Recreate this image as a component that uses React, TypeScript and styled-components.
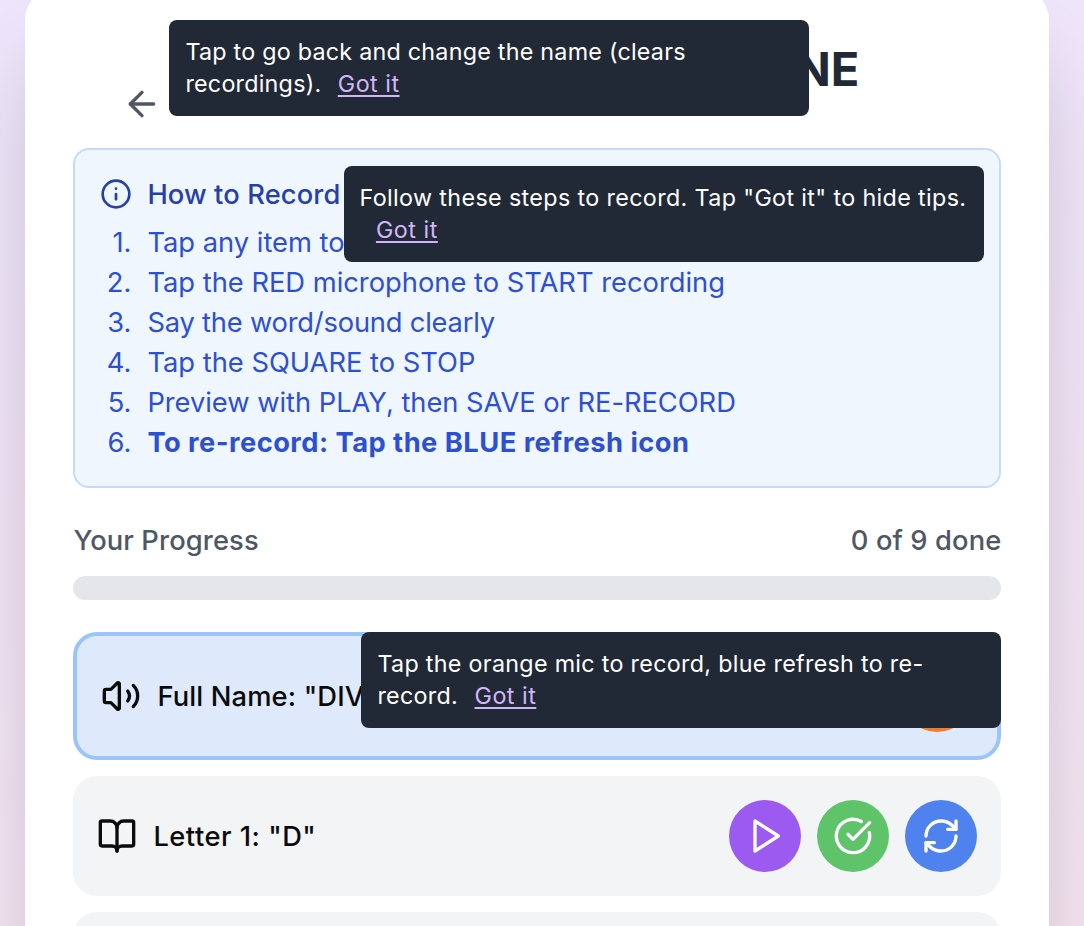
import React from "react";
import styled, { createGlobalStyle } from "styled-components";
import { ArrowLeft, BookOpen, CircleCheckBig, Info, Mic, RefreshCw, Volume2 } from "lucide-react";

const GlobalStyle = createGlobalStyle`
  * { box-sizing: border-box; }
  html, body { margin: 0; padding: 0; }
  body {
    height: 926px;
    overflow: hidden;
    font-family: Inter, "Liberation Sans", sans-serif;
    -webkit-font-smoothing: antialiased;
  }
`;

const Page = styled.div`
  height: 926px;
  overflow: hidden;
  padding: 0 34.6px 0 25.4px;
  background: linear-gradient(173deg, #efe6fd 0, #f2e5f8 450px, #f6e6f3 1050px);
`;

const Card = styled.main`
  width: 1024px;
  height: 2200px;
  margin-top: -12px;
  padding: 48px;
  border-radius: 32px;
  background: #fff;
  box-shadow: 0 50px 100px -24px rgba(0, 0, 0, 0.25);
`;

const Header = styled.header`
  position: relative;
  display: flex;
  align-items: flex-start;
  height: 112.4px;
`;

const BackButton = styled.button`
  display: flex;
  margin-top: 32px;
  padding: 16px 16px 16px 49px;
  border: 0;
  background: none;
  color: #4f5764;
`;

const Title = styled.h1`
  flex: 1;
  margin: 0;
  padding: 1px 142px 0 0;
  text-align: right;
  font-size: 47px;
  line-height: 64px;
  font-weight: 700;
  color: #222936;
  white-space: nowrap;
`;

const Tip = styled.div<{ $left: number; $top: number; $tracking: number }>`
  position: absolute;
  z-index: 2;
  left: ${(p) => p.$left}px;
  top: ${(p) => p.$top}px;
  width: 640px;
  padding: 16px;
  border-radius: 8px;
  background: #222936;
  color: #fff;
  font-size: 23.3px;
  font-weight: 400;
  line-height: 32px;
  letter-spacing: ${(p) => p.$tracking}px;
`;

const TipLink = styled.button`
  margin: 0 0 0 16.4px;
  padding: 0;
  border: 0;
  background: none;
  color: #d2b5f9;
  font: inherit;
  letter-spacing: 0.5px;
  text-decoration: underline;
  text-decoration-thickness: 2px;
  text-underline-offset: 3px;
`;

const InfoBox = styled.section`
  position: relative;
  padding: 24px;
  border: 2px solid #c4dbfb;
  border-radius: 16px;
  background: #f0f6fe;
`;

const InfoHeading = styled.h2`
  display: flex;
  align-items: center;
  gap: 15.4px;
  height: 40px;
  margin: 0 0 8.6px;
  padding-left: 0.6px;
  font-size: 27.3px;
  line-height: 40px;
  font-weight: 500;
  letter-spacing: 0.12px;
  color: #2740a8;

  span {
    padding-top: 1px;
  }
`;

const Steps = styled.ol`
  margin: 0 0 -0.6px;
  padding: 0;
  list-style: none;
  counter-reset: step;
  font-size: 27.3px;
  line-height: 40px;
  color: #2d50d2;
`;

const Step = styled.li<{ $tracking?: number }>`
  display: flex;
  counter-increment: step;
  letter-spacing: ${(p) => p.$tracking ?? 0}px;

  &::before {
    content: counter(step) ".";
    width: 32px;
    margin-right: 16px;
    text-align: right;
    letter-spacing: 0;
  }
`;

const Strong = styled.strong`
  font-weight: 700;
  letter-spacing: 0.47px;
`;

const ProgressLabels = styled.div`
  display: flex;
  justify-content: space-between;
  margin: 32.6px 0 15.4px;
  font-size: 27.3px;
  line-height: 40px;
  font-weight: 500;
  letter-spacing: 0.12px;
  color: #4f5764;
`;

const Track = styled.div`
  height: 24px;
  border-radius: 12px;
  background: #e5e6ea;
`;

const Rows = styled.div`
  display: flex;
  flex-direction: column;
  gap: 16px;
  margin-top: 32px;
`;

const RowBox = styled.div<{ $active?: boolean }>`
  position: relative;
  display: flex;
  align-items: center;
  justify-content: space-between;
  min-height: 120px;
  padding: 24px;
  border-radius: 24px;
  border: ${(p) => (p.$active ? "4px solid #9bc4fa" : "0")};
  background: ${(p) => (p.$active ? "#dee9fc" : "#f3f4f6")};
`;

const Label = styled.div<{ $tracking: number }>`
  display: flex;
  align-items: center;
  gap: 16px;
  height: 40px;
  font-size: 27.3px;
  line-height: 40px;
  font-weight: 500;
  letter-spacing: ${(p) => p.$tracking}px;
  color: #0b0b0b;

  span {
    padding-top: 1px;
  }
`;

const Actions = styled.div`
  display: flex;
  gap: 16px;
`;

const RoundButton = styled.button<{ $color: string }>`
  display: flex;
  align-items: center;
  justify-content: center;
  width: 72px;
  height: 72px;
  padding: 0;
  border: 0;
  border-radius: 50%;
  background: ${(p) => p.$color};
  color: #fff;
`;

const PlayIcon = () => (
  <svg width="40" height="40" viewBox="0 0 24 24" fill="none" stroke="currentColor" strokeWidth="2" strokeLinecap="round" strokeLinejoin="round">
    <polygon points="6 3 20 12 6 21 6 3" />
  </svg>
);

function RecordedRow({ label }: { label: string }) {
  return (
    <RowBox>
      <Label $tracking={0.5}>
        <BookOpen size={40} />
        <span>{label}</span>
      </Label>
      <Actions>
        <RoundButton $color="#9d5af0" aria-label="Play"><PlayIcon /></RoundButton>
        <RoundButton $color="#5fc36a" aria-label="Saved"><CircleCheckBig size={40} /></RoundButton>
        <RoundButton $color="#4f82ee" aria-label="Re-record"><RefreshCw size={40} /></RoundButton>
      </Actions>
    </RowBox>
  );
}

export default function App() {
  return (
    <>
      <GlobalStyle />
      <Page>
        <Card>
          <Header>
            <BackButton aria-label="Back"><ArrowLeft size={40} /></BackButton>
            <Title>DIVINE</Title>
            <Tip $left={96} $top={-16} $tracking={0.24}>
              Tap to go back and change the name (clears recordings).<TipLink>Got it</TipLink>
            </Tip>
          </Header>
          <InfoBox>
            <InfoHeading>
              <Info size={32} />
              <span>How to Record</span>
            </InfoHeading>
            <Steps>
              <Step>Tap any item to</Step>
              <Step>Tap the RED microphone to START recording</Step>
              <Step $tracking={-0.2}>Say the word/sound clearly</Step>
              <Step>Tap the SQUARE to STOP</Step>
              <Step $tracking={-0.03}>Preview with PLAY, then SAVE or RE-RECORD</Step>
              <Step><Strong>To re-record: Tap the BLUE refresh icon</Strong></Step>
            </Steps>
            <Tip $left={268.2} $top={15.6} $tracking={0.36}>
              Follow these steps to record. Tap "Got it" to hide tips.<TipLink>Got it</TipLink>
            </Tip>
          </InfoBox>
          <ProgressLabels>
            <span>Your Progress</span>
            <span>0 of 9 done</span>
          </ProgressLabels>
          <Track />
          <Rows>
            <RowBox $active>
              <Label $tracking={0.15}>
                <Volume2 size={40} />
                <span>Full Name: "DIVINE"</span>
              </Label>
              <Actions>
                <RoundButton $color="#ed7d31" aria-label="Record"><Mic size={40} /></RoundButton>
              </Actions>
              <Tip $left={284} $top={-4} $tracking={0.3}>
                Tap the orange mic to record, blue refresh to re-record.<TipLink>Got it</TipLink>
              </Tip>
            </RowBox>
            <RecordedRow label={'Letter 1: "D"'} />
            <RowBox />
          </Rows>
        </Card>
      </Page>
    </>
  );
}
